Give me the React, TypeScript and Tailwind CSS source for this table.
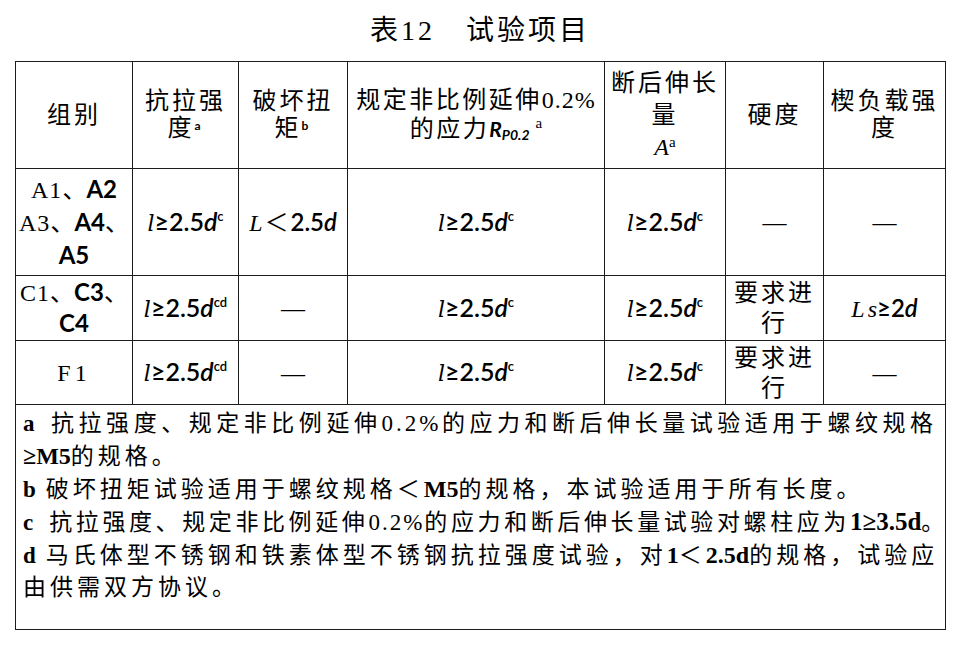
import type { ReactNode } from "react";

const serif = "[font-family:'Liberation_Serif','Noto_Sans_CJK_SC',serif]";
const num = "[font-family:Lato,'Liberation_Sans',sans-serif]";

function Len({ sup }: { sup: string }) {
  return (
    <span className="whitespace-nowrap text-[25px] tracking-normal">
      <span className="italic [font-family:'DejaVu_Serif',serif] text-[22px]">l</span>
      <span className={`${num} font-semibold`}>
        ≥2.5<i>d</i>
      </span>
      <sup className={`${num} top-[-0.75em] text-[13px] font-semibold`}>{sup}</sup>
    </span>
  );
}

function Dash() {
  return <span className="tracking-normal">—</span>;
}

function Td({ children, className = "" }: { children?: ReactNode; className?: string }) {
  return (
    <td className={`border border-[#1c1c1c] p-0 text-center align-middle ${className}`}>
      {children}
    </td>
  );
}

// lines a and d wrap in the source, so they are justified to the full width
const justified = "w-[914px] text-justify [text-align-last:justify]";

export default function App() {
  return (
    <div className={`h-[645px] w-[960px] bg-white text-black ${serif}`}>
      <div className="flex h-[61px] items-center justify-center text-[28px] tracking-[3px]">
        表12　试验项目
      </div>

      <table className="ml-[15px] w-[930px] table-fixed border-collapse text-[24px] tracking-[3px]">
        <colgroup>
          <col className="w-[117px]" />
          <col className="w-[106px]" />
          <col className="w-[109px]" />
          <col className="w-[257px]" />
          <col className="w-[121px]" />
          <col className="w-[98px]" />
          <col className="w-[122px]" />
        </colgroup>
        <tbody>
          <tr className="h-[107px] leading-[27px]">
            <Td>组别</Td>
            <Td>
              抗拉强
              <br />
              度<sup className={`${num} top-[-0.5em] text-[12px] font-bold`}>a</sup>
            </Td>
            <Td>
              破坏扭
              <br />
              矩<sup className={`${num} top-[-0.5em] text-[12px] font-bold`}>b</sup>
            </Td>
            <Td className="tracking-[2.5px]">
              规定非比例延伸<span className="tracking-[1px]">0.2%</span>
              <br />
              的应力
              <span className={`${num} whitespace-nowrap font-bold italic tracking-normal`}>
                <span className="text-[21px]">R</span>
                <sub className="bottom-[-0.2em] text-[14px]">P0.2</sub>
              </span>
              <sup className="top-[-0.6em] ml-[6px] text-[15px] tracking-normal">a</sup>
            </Td>
            <Td className="leading-[32px]">
              断后伸长
              <br />
              量
              <br />
              <span className="italic tracking-normal">A</span>
              <sup className="top-[-0.55em] text-[15px] tracking-normal">a</sup>
            </Td>
            <Td>硬度</Td>
            <Td>
              楔负载强
              <br />度
            </Td>
          </tr>

          <tr className="h-[107px]">
            <Td className="leading-[31px] tracking-normal">
              <span className="tracking-[1px]">A1</span>、<b className={num}>A2</b>
              <br />
              <span className="tracking-[1px]">A3</span>、<b className={num}>A4</b>、
              <br />
              <b className={num}>A5</b>
            </Td>
            <Td>
              <Len sup="c" />
            </Td>
            <Td className="tracking-normal">
              <span className="italic">L</span>
              <span className="mx-[2px]">＜</span>
              <span className={`${num} font-semibold`}>
                2.5<i>d</i>
              </span>
            </Td>
            <Td>
              <Len sup="c" />
            </Td>
            <Td>
              <Len sup="c" />
            </Td>
            <Td>
              <Dash />
            </Td>
            <Td>
              <Dash />
            </Td>
          </tr>

          <tr className="h-[65px] leading-[30px]">
            <Td className="tracking-normal">
              <span className="tracking-[1px]">C1</span>、<b className={num}>C3</b>、
              <br />
              <b className={num}>C4</b>
            </Td>
            <Td>
              <Len sup="cd" />
            </Td>
            <Td>
              <Dash />
            </Td>
            <Td>
              <Len sup="c" />
            </Td>
            <Td>
              <Len sup="c" />
            </Td>
            <Td>
              要求进
              <br />行
            </Td>
            <Td className="tracking-normal">
              <span className="italic">L</span>
              <span className="ml-[3px] italic">s</span>
              <span className={`${num} font-semibold`}>
                ≥2<i>d</i>
              </span>
            </Td>
          </tr>

          <tr className="h-[64px] leading-[30px]">
            <Td className="tracking-[4px]">F1</Td>
            <Td>
              <Len sup="cd" />
            </Td>
            <Td>
              <Dash />
            </Td>
            <Td>
              <Len sup="c" />
            </Td>
            <Td>
              <Len sup="c" />
            </Td>
            <Td>
              要求进
              <br />行
            </Td>
            <Td>
              <Dash />
            </Td>
          </tr>

          <tr className="h-[225px]">
            <td
              colSpan={7}
              className="border border-[#1c1c1c] p-0 pl-[7px] pt-[3px] text-left align-top text-[23px] leading-[32px] tracking-[4px]"
            >
              <div className={`${justified} whitespace-nowrap`}>
                <b className="mr-[16px] tracking-normal">a</b>抗拉强度、规定非比例延伸
                <span className="tracking-[3px]">0.2%</span>的应力和断后伸长量试验适用于螺纹规格
              </div>
              <div className="whitespace-nowrap">
                <b className="text-[24px] tracking-normal">≥M5</b>的规格。
              </div>
              <div className="whitespace-nowrap">
                <b className="mr-[10px] tracking-normal">b</b>破坏扭矩试验适用于螺纹规格＜
                <b className="text-[24px] tracking-normal">M5</b>的规格，本试验适用于所有长度。
              </div>
              <div className="whitespace-nowrap tracking-[3.6px]">
                <b className="mr-[16px] tracking-normal">c</b>抗拉强度、规定非比例延伸
                <span className="tracking-[2px]">0.2%</span>的应力和断后伸长量试验对螺柱应为
                <b className="text-[25px] tracking-normal">1≥3.5d</b>
                <span className="tracking-normal">。</span>
              </div>
              <div className={`${justified} whitespace-nowrap`}>
                <b className="mr-[10px] tracking-normal">d</b>马氏体型不锈钢和铁素体型不锈钢抗拉强度试验，对
                <b className="text-[24px] tracking-normal">1</b>＜
                <b className="text-[24px] tracking-normal">2.5d</b>的规格，试验应
              </div>
              <div className="whitespace-nowrap">由供需双方协议。</div>
            </td>
          </tr>
        </tbody>
      </table>
    </div>
  );
}
